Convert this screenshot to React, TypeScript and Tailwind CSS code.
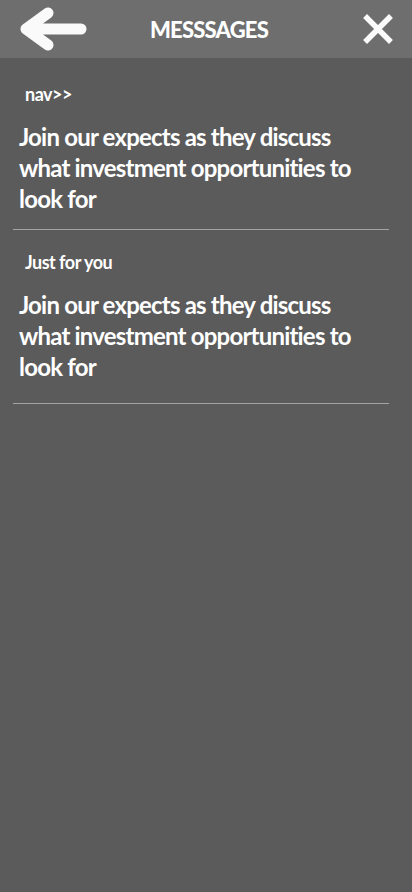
import { X } from "lucide-react";

const items = [
  {
    label: "nav>>",
    text: "Join our expects as they discuss what investment opportunities to look for",
    pad: "pb-[15px] mb-[20px]",
  },
  {
    label: "Just for you",
    text: "Join our expects as they discuss what investment opportunities to look for",
    pad: "pb-[21px]",
  },
];

export default function App() {
  return (
    <main
      className="min-h-[892px] w-full bg-[#5b5b5b] text-white"
      style={{ fontFamily: "Lato, 'Open Sans', sans-serif" }}
    >
      {/* Header */}
      <header className="grid h-[58px] grid-cols-[1fr_auto_1fr] items-center bg-[#6e6e6e] pl-[18px] pr-[12px]">
        <svg width="70" height="46" viewBox="0 0 70 46" fill="none">
          <path
            d="M63 23H8M8 23L30 7M8 23L30 39"
            stroke="#fafafa"
            strokeWidth="11"
            strokeLinecap="round"
            strokeLinejoin="round"
          />
        </svg>
        <h1 className="text-[22px] font-black tracking-[-0.8px]">MESSSAGES</h1>
        <div className="flex justify-end">
          <X size={44} strokeWidth={3} strokeLinecap="square" className="text-[#fafafa]" />
        </div>
      </header>

      {/* Messages */}
      <div className="px-[13px] pt-[24px]">
        {items.map((item, i) => (
          <section key={i} className={`w-[376px] border-b border-[#a3a3a3] ${item.pad}`}>
            <div className="pl-[12px] text-[18px] font-bold leading-[24px] tracking-[-0.5px]">
              {item.label}
            </div>
            <p className="mt-[15px] w-[346px] pl-[6px] text-[24px] font-bold leading-[31px] tracking-[-0.8px]">
              {item.text}
            </p>
          </section>
        ))}
      </div>
    </main>
  );
}
